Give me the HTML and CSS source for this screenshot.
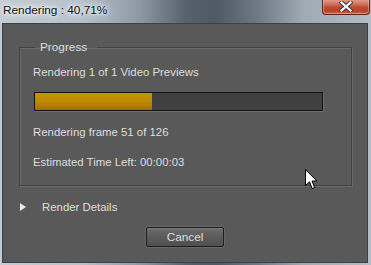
FILE: index.html
```html
<!DOCTYPE html>
<html lang="en">
<head>
  <meta charset="UTF-8">
  <title>Rendering</title>
  <link rel="stylesheet" href="styles.css">
</head>
<body>
  <div class="window">
    <!-- title bar -->
    <div class="titlebar">
      <span class="title">Rendering : 40,71%</span>
      <button class="close" aria-label="Close">
        <svg width="14" height="11" viewBox="0 0 14 11">
          <path d="M2.5 1.5 L11.5 9.5 M11.5 1.5 L2.5 9.5" stroke="#3a3a3a" stroke-width="4.2" stroke-linecap="square" fill="none"/>
          <path d="M2.5 1.5 L11.5 9.5 M11.5 1.5 L2.5 9.5" stroke="#fff" stroke-width="2.2" stroke-linecap="square" fill="none"/>
        </svg>
      </button>
    </div>

    <div class="client">
      <fieldset class="group">
        <legend>Progress</legend>
        <p class="line">Rendering 1 of 1 Video Previews</p>
        <div class="bar"><div class="fill" style="width: 40.71%"></div></div>
        <p class="line frame">Rendering frame 51 of 126</p>
        <p class="line eta">Estimated Time Left: 00:00:03</p>
      </fieldset>

      <div class="details"><span class="arrow"></span>Render Details</div>

      <div class="actions">
        <button class="btn">Cancel</button>
      </div>

      <!-- mouse pointer caught in the screenshot -->
      <svg class="cursor" width="13" height="21" viewBox="0 0 13 21">
        <path d="M0.5 0.5 L0.5 16.5 L4.5 12.8 L7.2 19.5 L9.6 18.5 L7 12 L11.8 12 Z" fill="#fff" stroke="#000" stroke-width="1" stroke-linejoin="miter"/>
      </svg>
    </div>
  </div>
</body>
</html>
```

FILE: styles.css
```css
* { box-sizing: border-box; }
body {
  margin: 0;
  width: 371px;
  height: 265px;
  overflow: hidden;
  font-family: "Liberation Sans", Arial, sans-serif;
  background: linear-gradient(90deg, #c3ccd4 0%, #b7c1ca 22%, #8b98a4 38%, #56636f 50%, #4d5a66 58%, #6f7c88 70%, #a0aab3 82%, #b4bdc5 100%);
}
.window {
  height: 265px;
  display: flex;
  flex-direction: column;
}

/* title bar */
.titlebar {
  height: 23px;
  display: flex;
  align-items: flex-start;
  padding-left: 3px;
}
.title {
  font-size: 11.8px;
  line-height: 20px;
  color: #111;
  text-shadow: 0 0 6px #fff, 0 0 10px #fff, 0 0 3px #f4f6f8;
}
.close {
  margin: -1px 1px 0 auto;
  width: 48px;
  height: 16px;
  padding: 0;
  border: 1px solid #5b2419;
  border-top: none;
  border-radius: 0 0 4px 4px;
  background: linear-gradient(#e2a593 0%, #d2705a 35%, #c04a31 55%, #b8432b 80%, #cc6a4f 100%);
  box-shadow: inset 0 0 0 1px rgba(255, 200, 180, 0.45);
  display: flex;
  align-items: center;
  justify-content: center;
}
.close svg { display: block; }

/* dialog body */
.client {
  position: relative;
  flex: 1;
  margin: 0 3px 2px 2px;
  border: 1px solid #38424c;
  background: #595959;
  color: #dedede;
  font-size: 11.4px;
}
.group {
  margin: 16px 15px 0 16px;
  padding: 11px 0 16px 13px;
  border: 1px solid #424242;
  box-shadow: 1px 1px 0 #6a6a6a, inset 1px 1px 0 #6a6a6a;
  min-width: 0;
}
.group legend {
  margin-left: 2px;
  padding: 0 10px 0 5px;
  line-height: 14px;
  font-size: 11.8px;
  color: #dedede;
}
.line {
  margin: 0;
  line-height: 14px;
}
.bar {
  margin: 13px 0 0 1px;
  width: 289px;
  height: 19px;
  border: 1px solid #141414;
  background: #404040;
  box-shadow: 1px 1px 0 #6c6c6c;
}
.fill {
  height: 100%;
  background: linear-gradient(#c89200 0%, #bb8900 55%, #9d7000 100%);
}
.frame { margin-top: 14px; }
.eta { margin-top: 16px; }

.details {
  margin-top: 14px;
  padding-left: 17px;
  line-height: 14px;
  display: flex;
  align-items: center;
}
.arrow {
  width: 0;
  height: 0;
  border-left: 6px solid #ececec;
  border-top: 4px solid transparent;
  border-bottom: 4px solid transparent;
  margin-right: 16px;
}
.actions {
  margin-top: 13px;
  display: flex;
  justify-content: center;
}
.btn {
  width: 78px;
  height: 20px;
  padding: 0;
  font-family: inherit;
  font-size: 11.8px;
  color: #dedede;
  border: 1px solid #1e1e1e;
  border-radius: 2px;
  background: linear-gradient(#6c6c6c 0%, #5c5c5c 50%, #4f4f4f 100%);
  box-shadow: 0 0 0 1px #666, inset 0 1px 0 #777;
}
.cursor {
  position: absolute;
  left: 302px;
  top: 145px;
}
```
